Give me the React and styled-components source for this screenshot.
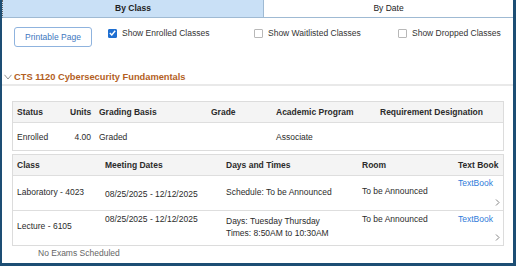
import styled, { createGlobalStyle } from 'styled-components';

const Global = createGlobalStyle`
  html, body { margin: 0; padding: 0; background: #fff; }
`;

const Frame = styled.div`
  width: 516px;
  height: 266px;
  box-sizing: border-box;
  border-left: 2px solid #1d4e74;
  border-right: 3px solid #1d4e74;
  border-bottom: 3px solid #1d4e74;
  background: #fff;
  overflow: hidden;
  font-family: "Liberation Sans", Arial, sans-serif;
  font-size: 8.5px;
  line-height: 12px;
  color: #2b2b2b;
`;

const Tabs = styled.div`
  display: grid;
  grid-template-columns: 261px 1fr;
  height: 18px;
`;

const Tab = styled.div`
  box-sizing: border-box;
  height: 18px;
  line-height: 17px;
  text-align: center;
  font-weight: ${p => (p.$active ? 700 : 400)};
  background: ${p => (p.$active ? '#c9e0f6' : '#fff')};
  border-bottom: 1px solid #9fbad3;
  border-left: ${p => (p.$active ? '1px dotted #666' : '1px solid #9fbad3')};
  color: #222;
`;

const Toolbar = styled.div`
  display: flex;
  align-items: flex-start;
  padding: 9px 0 0 12px;
`;

const PrintButton = styled.button`
  width: 78px;
  height: 20px;
  margin-right: 16px;
  padding: 0;
  background: #fff;
  border: 1px solid #8fb3de;
  border-radius: 3px;
  color: #3d77c0;
  font-family: inherit;
  font-size: 8.5px;
`;

const Option = styled.label`
  display: flex;
  align-items: center;
  gap: 5px;
  height: 12px;
  width: ${p => p.$w || 'auto'};
  color: #333;
`;

const Box = styled.span`
  box-sizing: border-box;
  width: 9px;
  height: 9px;
  border-radius: 1px;
  display: flex;
  align-items: center;
  justify-content: center;
  background: ${p => (p.$checked ? '#1f6fd1' : '#fff')};
  border: 1px solid ${p => (p.$checked ? '#1f6fd1' : '#b8b8b8')};
`;

const Heading = styled.div`
  display: flex;
  align-items: center;
  gap: 2px;
  height: 12px;
  margin-top: 24px;
  padding: 0 0 1px 2px;
  border-bottom: 2px solid #e9e9e9;
`;

const Title = styled.span`
  color: #b35f1f;
  font-weight: 700;
  font-size: 9.3px;
`;

const Table = styled.div`
  margin: ${p => p.$top}px 9px 0 10px;
  border: 1px solid #dcdcdc;
`;

const Row = styled.div`
  display: grid;
  grid-template-columns: ${p => p.$cols};
  height: ${p => p.$h}px;
  align-items: ${p => (p.$center ? 'center' : 'stretch')};
  background: ${p => (p.$head ? '#f4f4f4' : '#fff')};
  font-weight: ${p => (p.$head ? 700 : 400)};
  & + & {
    border-top: 1px solid #dedede;
  }
`;

const Cell = styled.div`
  padding: ${p => p.$pt || 0}px 4px 0;
  text-align: ${p => (p.$right ? 'right' : 'left')};
  white-space: nowrap;
`;

const BookCell = styled(Cell)`
  display: flex;
  flex-direction: column;
  padding-bottom: 4px;
`;

const BookLink = styled.a`
  color: #2f7bd9;
  text-decoration: none;
`;

const More = styled.svg`
  margin-top: auto;
  align-self: flex-end;
  margin-right: -1px;
`;

const Note = styled.div`
  margin-top: 1px;
  padding-left: 36px;
  color: #666;
`;

const COLS1 = '53px 29px 112px 65px 104px 1fr';
const COLS2 = '88px 121px 136px 96px 1fr';

const Check = () => (
  <svg width="7" height="6" viewBox="0 0 7 6">
    <polyline points="0.8,3 2.8,5 6.2,0.8" fill="none" stroke="#fff" strokeWidth="1.4" />
  </svg>
);

const Chevron = () => (
  <More width="5" height="7" viewBox="0 0 5 7">
    <polyline points="1,0.5 4,3.5 1,6.5" fill="none" stroke="#777" strokeWidth="0.9" />
  </More>
);

const classes = [
  {
    name: 'Laboratory - 4023',
    pads: [10, 12, 10, 9, 1],
    days: ['Schedule: To be Announced'],
  },
  {
    name: 'Lecture - 6105',
    pads: [9, 2, 4, 2, 2],
    days: ['Days: Tuesday Thursday', 'Times: 8:50AM to 10:30AM'],
  },
];

export default function App() {
  return (
    <Frame>
      <Global />
      <Tabs>
        <Tab $active>By Class</Tab>
        <Tab>By Date</Tab>
      </Tabs>

      <Toolbar>
        <PrintButton>Printable Page</PrintButton>
        <Option $w="146px">
          <Box $checked><Check /></Box>
          Show Enrolled Classes
        </Option>
        <Option $w="144px">
          <Box />
          Show Waitlisted Classes
        </Option>
        <Option>
          <Box />
          Show Dropped Classes
        </Option>
      </Toolbar>

      <Heading>
        <svg width="8" height="6" viewBox="0 0 8 6">
          <polyline points="0.5,0.8 4,5 7.5,0.8" fill="none" stroke="#888" strokeWidth="0.9" />
        </svg>
        <Title>CTS 1120 Cybersecurity Fundamentals</Title>
      </Heading>

      <Table $top={15}>
        <Row $cols={COLS1} $h={20} $center $head>
          <Cell>Status</Cell>
          <Cell $right>Units</Cell>
          <Cell>Grading Basis</Cell>
          <Cell>Grade</Cell>
          <Cell>Academic Program</Cell>
          <Cell>Requirement Designation</Cell>
        </Row>
        <Row $cols={COLS1} $h={27} $center>
          <Cell>Enrolled</Cell>
          <Cell $right>4.00</Cell>
          <Cell>Graded</Cell>
          <Cell />
          <Cell>Associate</Cell>
          <Cell />
        </Row>
      </Table>

      <Table $top={3}>
        <Row $cols={COLS2} $h={20} $center $head>
          <Cell>Class</Cell>
          <Cell>Meeting Dates</Cell>
          <Cell>Days and Times</Cell>
          <Cell>Room</Cell>
          <Cell>Text Book</Cell>
        </Row>
        {classes.map(c => (
          <Row key={c.name} $cols={COLS2} $h={34}>
            <Cell $pt={c.pads[0]}>{c.name}</Cell>
            <Cell $pt={c.pads[1]}>08/25/2025 - 12/12/2025</Cell>
            <Cell $pt={c.pads[2]}>
              {c.days.map(d => <div key={d}>{d}</div>)}
            </Cell>
            <Cell $pt={c.pads[3]}>To be Announced</Cell>
            <BookCell $pt={c.pads[4]}>
              <BookLink href="#">TextBook</BookLink>
              <Chevron />
            </BookCell>
          </Row>
        ))}
      </Table>

      <Note>No Exams Scheduled</Note>
    </Frame>
  );
}
